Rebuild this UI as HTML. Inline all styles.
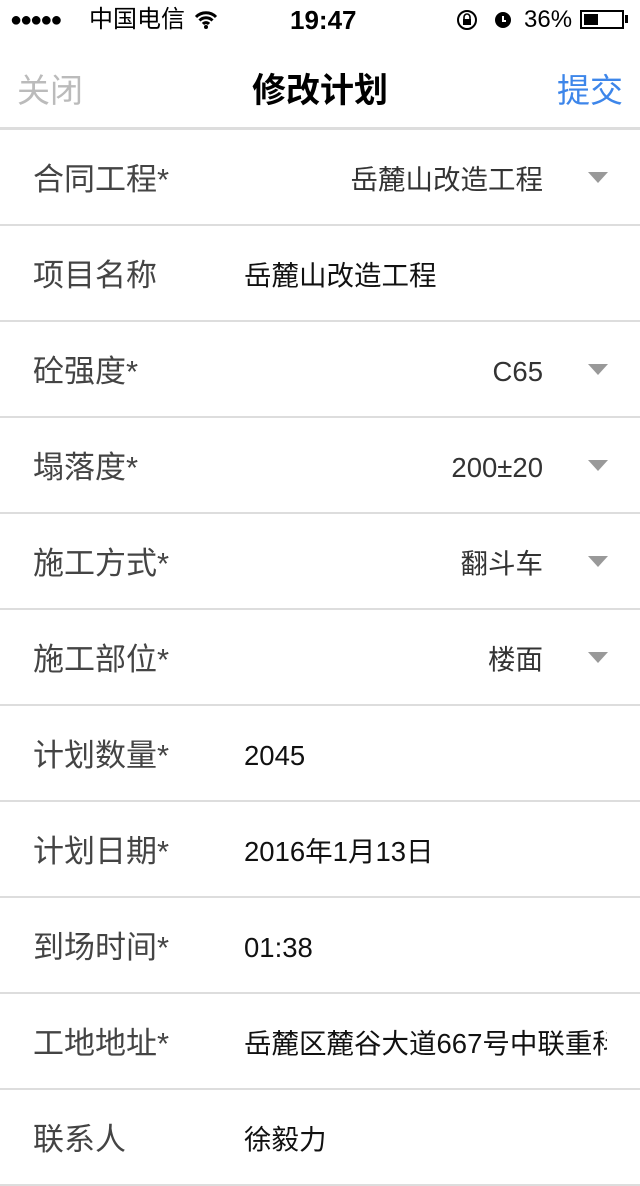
<html><head><style>
body{margin:0;width:640px;height:1136px;overflow:hidden;background:#fff;font-family:"Liberation Sans","Noto Sans CJK SC",sans-serif;position:relative}
.sb{position:absolute;top:0;left:0;width:640px;height:40px;font-size:24px;color:#000}
.sb span{line-height:40px;top:0 !important}
.nav{position:absolute;top:40px;left:0;width:640px;height:87px;border-bottom:3px solid #ddd;}
.row{position:absolute;left:0;width:640px;height:94px;border-bottom:2px solid #ddd;}
.lb{position:absolute;left:33px;top:30px;font-size:31px;color:#444;line-height:40px}
.vr{position:absolute;right:97px;top:32px;font-size:27.5px;color:#333;line-height:36px}
.vl{position:absolute;left:244px;top:32px;font-size:27.5px;color:#111;line-height:36px;white-space:nowrap}
.tri{position:absolute;left:588px;top:42px;width:0;height:0;border-left:10px solid transparent;border-right:10px solid transparent;border-top:11px solid #999}
</style></head><body>
<div class="sb">
<span style="position:absolute;left:10px;font-size:20px;letter-spacing:-2px">●●●●●</span>
<span style="position:absolute;left:89px">中国电信</span>
<svg style="position:absolute;left:194px;top:10px" width="24" height="20" viewBox="0 0 24 20"><path d="M2 7a14 14 0 0 1 20 0M5.5 10.5a9 9 0 0 1 13 0M9 14a4 4 0 0 1 6 0" stroke="#000" stroke-width="3" fill="none"/><circle cx="12" cy="17" r="2" fill="#000"/></svg>
<span style="position:absolute;left:290px;font-weight:bold;font-size:26px">19:47</span>
<svg style="position:absolute;left:456px;top:9px" width="24" height="22"><circle cx="11" cy="11" r="9" stroke="#000" stroke-width="2" fill="none"/><rect x="7" y="10" width="8" height="6" fill="#000"/><path d="M8 10V8a3 3 0 0 1 6 0v2" stroke="#000" stroke-width="1.6" fill="none"/></svg>
<svg style="position:absolute;left:492px;top:8px" width="22" height="22"><circle cx="11" cy="12" r="8" fill="#000"/><path d="M11 8v5h3" stroke="#fff" stroke-width="2" fill="none"/></svg>
<span style="position:absolute;left:524px">36%</span>
<div style="position:absolute;left:580px;top:10px;width:44px;height:19px;border:2px solid #000;box-sizing:border-box"><div style="margin:2px;width:14px;height:11px;background:#000"></div></div>
<div style="position:absolute;left:625px;top:15px;width:3px;height:8px;background:#000"></div>
</div>
<div class="nav">
<span style="position:absolute;left:17px;top:24px;font-size:33px;color:#bbb">关闭</span>
<span style="position:absolute;left:0;width:640px;text-align:center;top:23px;font-size:34px;font-weight:bold;color:#000">修改计划</span>
<span style="position:absolute;right:17px;top:24px;font-size:33px;color:#3d86ea">提交</span>
</div>
<div class="row" style="top:130px"><span class="lb">合同工程*</span><span class="vr">岳麓山改造工程</span><div class="tri"></div></div>
<div class="row" style="top:226px"><span class="lb">项目名称</span><span class="vl">岳麓山改造工程</span></div>
<div class="row" style="top:322px"><span class="lb">砼强度*</span><span class="vr">C65</span><div class="tri"></div></div>
<div class="row" style="top:418px"><span class="lb">塌落度*</span><span class="vr">200±20</span><div class="tri"></div></div>
<div class="row" style="top:514px"><span class="lb">施工方式*</span><span class="vr">翻斗车</span><div class="tri"></div></div>
<div class="row" style="top:610px"><span class="lb">施工部位*</span><span class="vr">楼面</span><div class="tri"></div></div>
<div class="row" style="top:706px"><span class="lb">计划数量*</span><span class="vl">2045</span></div>
<div class="row" style="top:802px"><span class="lb">计划日期*</span><span class="vl">2016年1月13日</span></div>
<div class="row" style="top:898px"><span class="lb">到场时间*</span><span class="vl">01:38</span></div>
<div class="row" style="top:994px;overflow:hidden"><span class="lb">工地地址*</span><span class="vl" style="width:363px;overflow:hidden">岳麓区麓谷大道667号中联重科</span></div>
<div class="row" style="top:1090px"><span class="lb">联系人</span><span class="vl">徐毅力</span></div>
</body></html>
